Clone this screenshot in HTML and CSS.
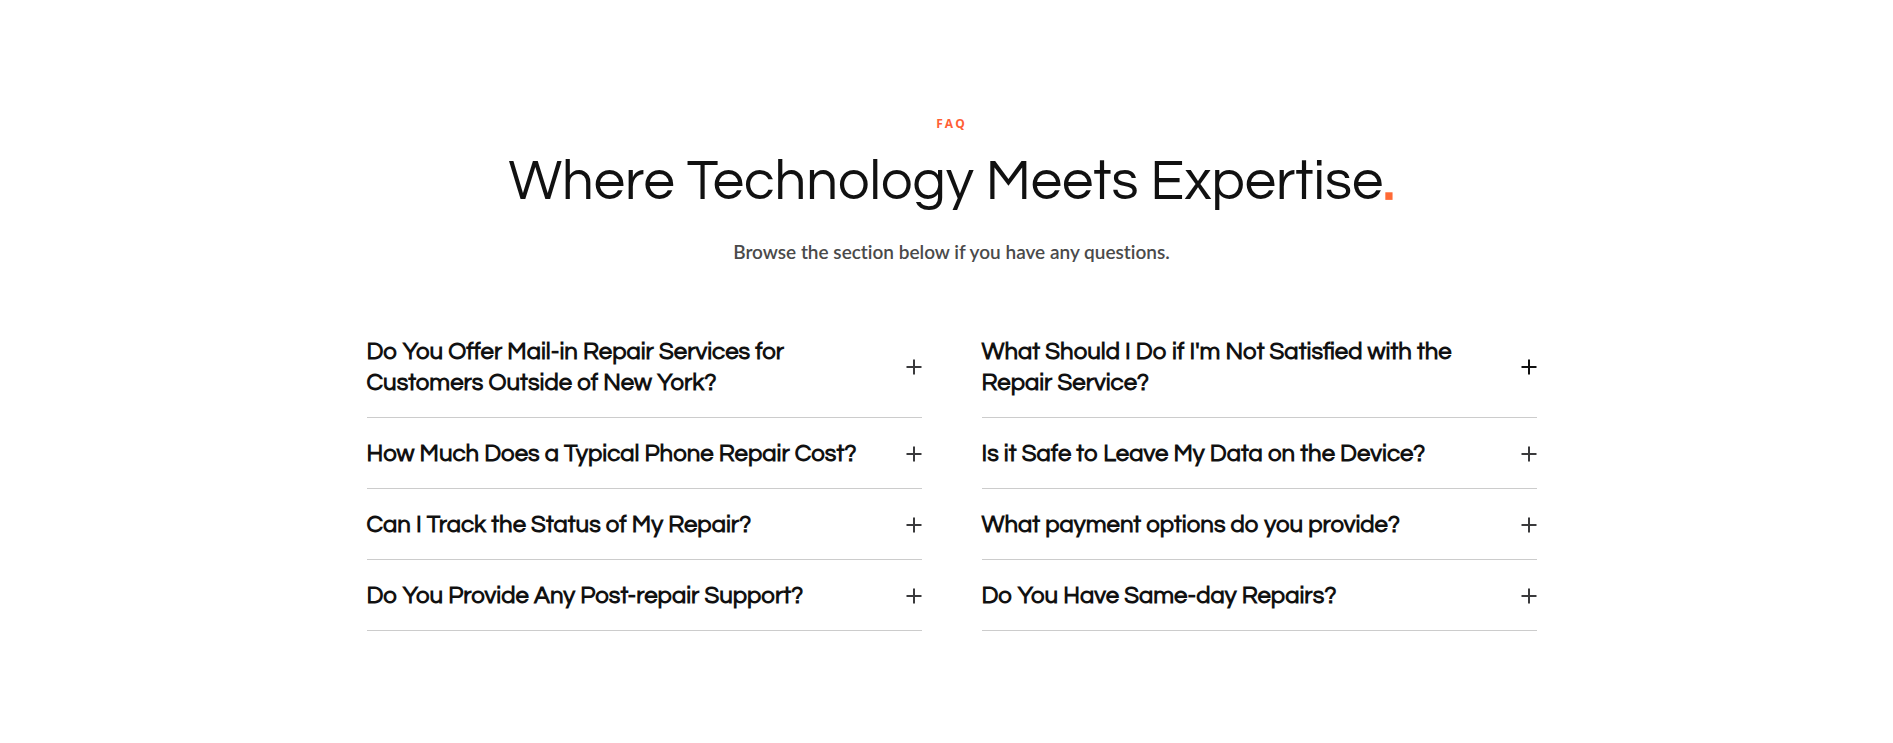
FILE: index.html
```html
<!DOCTYPE html>
<html lang="en">
<head>
<meta charset="utf-8">
<meta name="viewport" content="width=device-width, initial-scale=1">
<title>FAQ</title>
<link rel="stylesheet" href="styles.css">
</head>
<body>
<svg class="sprite" aria-hidden="true">
  <symbol id="plus" viewBox="0 0 16 16"><path d="M8 .5v15M.5 8h15" fill="none" stroke="currentColor" stroke-width="2"/></symbol>
</svg>
<main class="faq">
  <header class="intro">
    <p class="eyebrow">FAQ</p>
    <h1 class="title">Where Technology Meets Expertise<span class="dot">.</span></h1>
    <p class="lead">Browse the section below if you have any questions.</p>
  </header>
  <div class="columns">
    <div class="column">
      <h2 class="item"><button class="question" type="button" aria-expanded="false"><span>Do You Offer Mail-in Repair Services for<br>Customers Outside of New York?</span><svg class="icon" aria-hidden="true"><use href="#plus"/></svg></button></h2>
      <h2 class="item"><button class="question" type="button" aria-expanded="false"><span>How Much Does a Typical Phone Repair Cost?</span><svg class="icon" aria-hidden="true"><use href="#plus"/></svg></button></h2>
      <h2 class="item"><button class="question" type="button" aria-expanded="false"><span>Can I Track the Status of My Repair?</span><svg class="icon" aria-hidden="true"><use href="#plus"/></svg></button></h2>
      <h2 class="item"><button class="question" type="button" aria-expanded="false"><span>Do You Provide Any Post-repair Support?</span><svg class="icon" aria-hidden="true"><use href="#plus"/></svg></button></h2>
    </div>
    <div class="column">
      <h2 class="item"><button class="question" type="button" aria-expanded="false"><span>What Should I Do if I'm Not Satisfied with the<br>Repair Service?</span><svg class="icon icon-active" aria-hidden="true"><use href="#plus"/></svg></button></h2>
      <h2 class="item"><button class="question" type="button" aria-expanded="false"><span>Is it Safe to Leave My Data on the Device?</span><svg class="icon" aria-hidden="true"><use href="#plus"/></svg></button></h2>
      <h2 class="item"><button class="question" type="button" aria-expanded="false"><span>What payment options do you provide?</span><svg class="icon" aria-hidden="true"><use href="#plus"/></svg></button></h2>
      <h2 class="item"><button class="question" type="button" aria-expanded="false"><span>Do You Have Same-day Repairs?</span><svg class="icon" aria-hidden="true"><use href="#plus"/></svg></button></h2>
    </div>
  </div>
</main>
</body>
</html>
```
FILE: styles.css
```css
* { box-sizing: border-box; }

body {
  margin: 0;
  padding: 112px 0 112px 10px;
  background: #fff;
  color: #111;
  font-family: Questrial, Inter, "Liberation Sans", sans-serif;
}

.sprite { display: none; }

.faq {
  max-width: 1170px;
  margin: 0 auto;
}

.intro {
  text-align: center;
}

.eyebrow {
  margin: 0;
  font-family: "Open Sans", sans-serif;
  font-size: 12px;
  line-height: 24px;
  font-weight: 700;
  letter-spacing: 2px;
  color: #ff6035;
}

.title {
  margin: 13px 0 0;
  font-size: 56px;
  line-height: 66px;
  font-weight: 400;
}

.dot { color: #ff6a35; font-weight: 700; }

.lead {
  margin: 23px 0 0;
  font-family: Lato, sans-serif;
  font-size: 19px;
  line-height: 28px;
  font-weight: 600;
  font-variant-ligatures: none;
  color: #4a4a4a;
}

.columns {
  display: grid;
  grid-template-columns: repeat(2, minmax(0, 1fr));
  gap: 60px;
  margin-top: 50px;
}

.item {
  margin: 0;
  border-bottom: 1px solid #ccc;
}

.question {
  display: flex;
  align-items: center;
  justify-content: space-between;
  gap: 24px;
  width: 100%;
  padding: 20px 0 19px;
  border: 0;
  background: none;
  color: #111;
  font: inherit;
  font-size: 24px;
  line-height: 31px;
  font-weight: 700;
  text-align: left;
  cursor: pointer;
}

.icon {
  flex: none;
  width: 16px;
  height: 16px;
  color: #3a3a3c;
}

.icon-active { color: #111; }

@media (max-width: 1200px) {
  body { padding-left: 24px; padding-right: 24px; }
}

@media (max-width: 800px) {
  .columns { grid-template-columns: minmax(0, 1fr); gap: 0; }
  .title { font-size: 36px; line-height: 44px; }
}
```
